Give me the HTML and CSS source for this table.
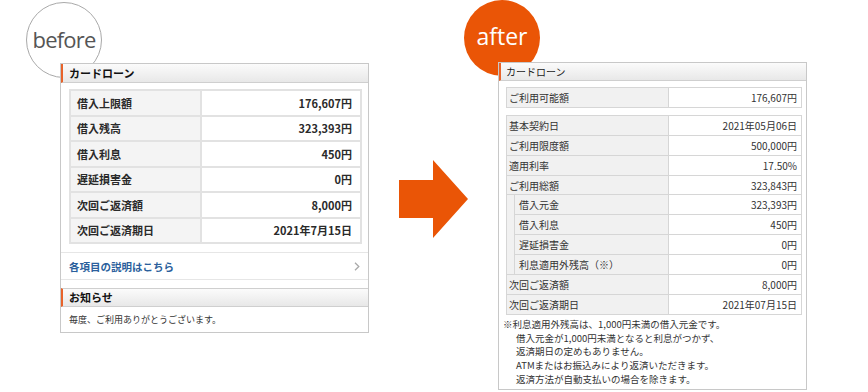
FILE: index.html
```html
<!DOCTYPE html>
<html lang="ja">
<head>
<meta charset="utf-8">
<title>before / after</title>
<link rel="stylesheet" href="styles.css">
</head>
<body>
<div class="stage">
  <section class="col col-before">
    <div class="badge badge-before">before</div>
    <div class="panel panel-before">
      <div class="phead">カードローン</div>
      <div class="pbody">
        <table class="tbl-b">
          <tr><th>借入上限額</th><td>176,607円</td></tr>
          <tr><th>借入残高</th><td>323,393円</td></tr>
          <tr><th>借入利息</th><td>450円</td></tr>
          <tr><th>遅延損害金</th><td>0円</td></tr>
          <tr><th>次回ご返済額</th><td>8,000円</td></tr>
          <tr><th>次回ご返済期日</th><td>2021年7月15日</td></tr>
        </table>
      </div>
      <div class="linkrow">
        <span class="linktext">各項目の説明はこちら</span>
        <svg class="chev" width="6" height="9" viewBox="0 0 6 9"><path d="M1 0.8 L4.8 4.5 L1 8.2" fill="none" stroke="#a9a9a9" stroke-width="1.3"/></svg>
      </div>
      <div class="phead phead-sep">お知らせ</div>
      <div class="notice">毎度、ご利用ありがとうございます。</div>
    </div>
  </section>

  <svg class="arrow" width="70" height="79" viewBox="0 0 70 79">
    <polygon points="0,20 34,20 34,0 69,39 34,78 34,58 0,58" fill="#ea5506"/>
  </svg>

  <section class="col col-after">
    <div class="badge badge-after">after</div>
    <div class="panel panel-after">
      <div class="phead phead-a">カードローン</div>
      <div class="pbody-a">
        <table class="tbl-a">
          <colgroup><col class="c-ind"><col class="c-lab"><col class="c-val"></colgroup>
          <tr><th colspan="2">ご利用可能額</th><td>176,607円</td></tr>
        </table>
        <table class="tbl-a tbl-a2">
          <colgroup><col class="c-ind"><col class="c-lab"><col class="c-val"></colgroup>
          <tr><th colspan="2">基本契約日</th><td>2021年05月06日</td></tr>
          <tr><th colspan="2">ご利用限度額</th><td>500,000円</td></tr>
          <tr><th colspan="2">適用利率</th><td>17.50%</td></tr>
          <tr><th colspan="2">ご利用総額</th><td>323,843円</td></tr>
          <tr><td class="ind" rowspan="4"></td><th class="sub">借入元金</th><td>323,393円</td></tr>
          <tr><th class="sub">借入利息</th><td>450円</td></tr>
          <tr><th class="sub">遅延損害金</th><td>0円</td></tr>
          <tr><th class="sub">利息適用外残高（※）</th><td>0円</td></tr>
          <tr><th colspan="2">次回ご返済額</th><td>8,000円</td></tr>
          <tr><th colspan="2">次回ご返済期日</th><td>2021年07月15日</td></tr>
        </table>
        <div class="note">
          <p class="note-first">※利息適用外残高は、1,000円未満の借入元金です。</p>
          <p class="note-line">借入元金が1,000円未満となると利息がつかず、</p>
          <p class="note-line">返済期日の定めもありません。</p>
          <p class="note-line">ATMまたはお振込みにより返済いただきます。</p>
          <p class="note-line">返済方法が自動支払いの場合を除きます。</p>
        </div>
      </div>
    </div>
  </section>
</div>
</body>
</html>
```

FILE: styles.css
```css
html, body {
  margin: 0;
  padding: 0;
  background: #fff;
}
body {
  font-family: "Noto Sans CJK JP", "Noto Sans", sans-serif;
  color: #333;
}
.stage {
  display: flex;
  align-items: flex-start;
  width: 868px;
  height: 392px;
  overflow: hidden;
}
.col {
  position: relative;
  flex: none;
}
.col-before {
  margin-left: 60px;
  margin-top: 63px;
  width: 309px;
}
.arrow {
  flex: none;
  display: block;
  margin-left: 30px;
  margin-top: 160px;
}
.col-after {
  margin-left: 29px;
  margin-top: 62px;
  width: 309px;
}

/* badges */
.badge {
  position: absolute;
  left: -34px;
  top: -61px;
  width: 76px;
  height: 76px;
  box-sizing: border-box;
  border-radius: 50%;
  display: flex;
  align-items: center;
  justify-content: center;
  font-family: "Open Sans", "DejaVu Sans", sans-serif;
  line-height: 1;
  padding-bottom: 3px;
  z-index: 0;
}
.badge-before {
  border: 1px solid #a9a9a9;
  background: #fff;
  color: #555;
  font-size: 22px;
  letter-spacing: -0.8px;
}
.badge-after {
  top: -62px;
  background: #ea5506;
  color: #fff;
  font-size: 23px;
}

/* panels */
.panel {
  position: relative;
  z-index: 1;
  background: #fff;
  border: 1px solid #c8c8c8;
}
.phead {
  height: 18px;
  line-height: 18px;
  padding-left: 6px;
  border-left: 2px solid #e8632a;
  border-bottom: 1px solid #cfcfcf;
  background: linear-gradient(#fbfbfb, #e8e8e8);
  font-size: 11px;
  font-weight: 700;
  color: #111;
}
.phead-sep {
  height: 17px;
  line-height: 17px;
  border-top: 1px solid #cfcfcf;
  margin-top: 8px;
}
.pbody {
  padding: 6px 6px 8px 8px;
}
.tbl-b {
  width: 293px;
  table-layout: fixed;
  border-collapse: separate;
  border-spacing: 0;
  border-top: 2px solid #e2e2e2;
  border-left: 2px solid #e2e2e2;
  font-size: 11px;
}
.tbl-b th, .tbl-b td {
  height: 23.5px;
  padding: 0;
  border-right: 2px solid #e2e2e2;
  border-bottom: 2px solid #e2e2e2;
  font-weight: 700;
  color: #2a2a2a;
}
.tbl-b th {
  width: 123px;
  padding-left: 6px;
  text-align: left;
  background: #f4f4f4;
}
.tbl-b td {
  padding-right: 8px;
  text-align: right;
  background: #fff;
}
.linkrow {
  display: flex;
  align-items: center;
  justify-content: space-between;
  height: 26px;
  padding: 0 8px 0 8px;
  border-top: 1px solid #e6e6e6;
  border-bottom: 1px solid #e6e6e6;
}
.linktext {
  font-size: 10.5px;
  font-weight: 700;
  color: #2b5f9c;
}
.chev {
  display: block;
}
.notice {
  height: 25px;
  line-height: 25px;
  padding-left: 8px;
  font-size: 9px;
  color: #333;
}

/* after panel */
.phead-a {
  height: 17px;
  line-height: 17px;
  padding-left: 5px;
  font-size: 10px;
  font-weight: 400;
  color: #222;
}
.pbody-a {
  padding: 6px 4px 2px 7px;
}
.tbl-a {
  width: 296px;
  table-layout: fixed;
  border-collapse: separate;
  border-spacing: 0;
  border-top: 1px solid #d6d6d6;
  border-left: 1px solid #d6d6d6;
  font-size: 10px;
  color: #333;
}
.tbl-a2 {
  margin-top: 7px;
}
.c-ind { width: 8px; }
.c-lab { width: 154px; }
.c-val { width: auto; }
.tbl-a th, .tbl-a td {
  height: 18.9px;
  padding: 0;
  border-right: 1px solid #d6d6d6;
  border-bottom: 1px solid #d6d6d6;
  font-weight: 400;
  white-space: nowrap;
}
.tbl-a th {
  padding-left: 2px;
  text-align: left;
  background: #f1f1f1;
}
.tbl-a th.sub {
  padding-left: 4px;
}
.tbl-a td {
  padding-right: 4px;
  text-align: right;
  background: #fff;
}
.tbl-a td.ind {
  padding: 0;
  background: #f1f1f1;
}
.note {
  margin: 3px 0 0 -3px;
  font-size: 9.5px;
  line-height: 13.8px;
  color: #333;
}
.note p {
  margin: 0;
  white-space: nowrap;
}
.note-line {
  padding-left: 13px;
}
```
